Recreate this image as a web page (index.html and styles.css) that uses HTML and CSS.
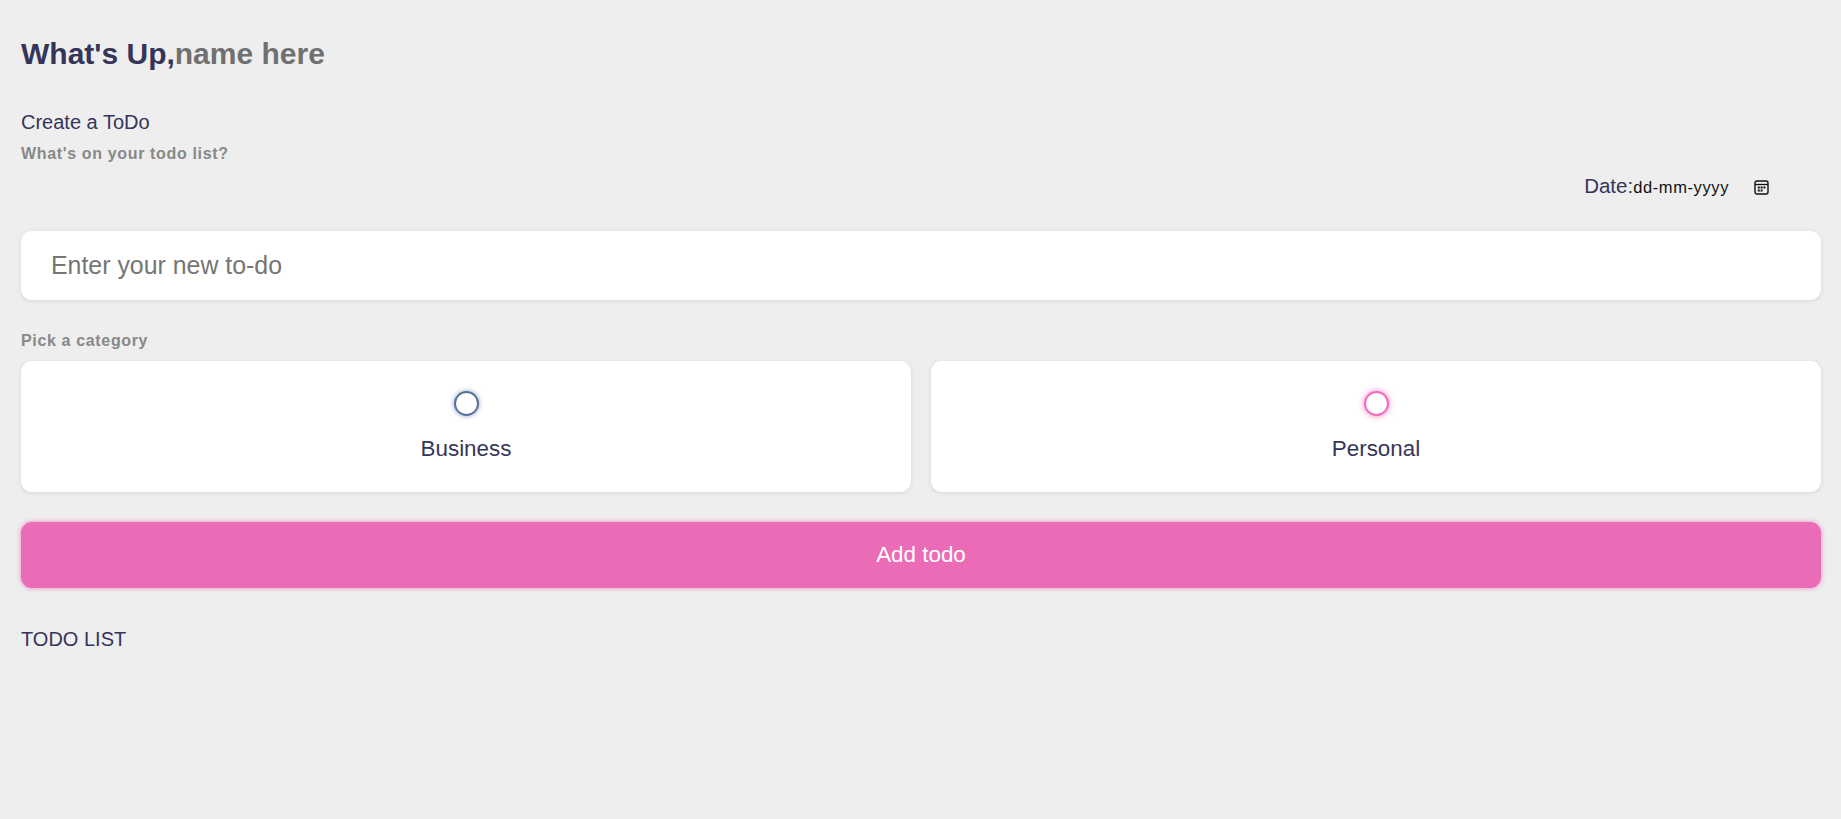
FILE: index.html
```html
<!DOCTYPE html>
<html lang="en">
<head>
<meta charset="utf-8">
<title>ToDo</title>
<link rel="stylesheet" href="styles.css">
</head>
<body>
<main class="app">
  <h2 class="greeting">What's Up,<span class="name">name here</span></h2>
  <section class="create">
    <h3 class="create-title">Create a ToDo</h3>
    <h4 class="label">What's on your todo list?</h4>
    <div class="date-row">
      <span class="date-label">Date:</span>
      <span class="date-value">dd-mm-yyyy</span>
      <svg class="date-icon" width="15" height="15" viewBox="0 0 15 15" aria-hidden="true">
        <rect x="1" y="1" width="13" height="13" rx="2" fill="none" stroke="#111" stroke-width="1.4"/>
        <path d="M1 4.5h13" stroke="#111" stroke-width="1.3"/>
        <path d="M3.8 6.6h2v2h-2zM6.6 6.6h2v2h-2zM9.4 6.6h2v2h-2zM3.8 9.6h2v2h-2zM6.6 9.6h2v2h-2z" fill="#111"/>
      </svg>
    </div>
    <div class="todo-input">Enter your new to-do</div>
    <h4 class="label label-category">Pick a category</h4>
    <div class="options">
      <div class="option">
        <span class="bubble bubble-business"></span>
        <span class="option-text">Business</span>
      </div>
      <div class="option">
        <span class="bubble bubble-personal"></span>
        <span class="option-text">Personal</span>
      </div>
    </div>
    <div class="add-btn">Add todo</div>
  </section>
  <section class="list">
    <h3 class="list-title">TODO LIST</h3>
  </section>
</main>
</body>
</html>
```
FILE: styles.css
```css
* { box-sizing: border-box; margin: 0; padding: 0; }
html, body { height: 100%; }
body {
  background: #eeeeee;
  color: #35355a;
  font-family: "Liberation Sans", Arial, sans-serif;
  overflow: hidden;
}
.app { padding: 37px 20px 0 21px; }
.greeting { font-size: 30px; line-height: 34px; font-weight: 700; }
.name { color: #707070; }
.create { margin-top: 40px; }
.create-title { font-size: 20px; line-height: 23px; font-weight: 400; }
.label { font-size: 16px; line-height: 18px; font-weight: 700; color: #888888; letter-spacing: 0.65px; }
.create-title + .label { margin-top: 11px; }
.date-row {
  display: flex;
  align-items: center;
  justify-content: flex-end;
  height: 24px;
  margin-top: 11px;
  padding-right: 52px;
}
.date-label { font-size: 20.5px; }
.date-value { font-size: 16.5px; letter-spacing: 0.6px; color: #111111; margin-top: 2px; margin-right: 1px; }
.date-icon { margin-left: 24px; margin-top: 2px; }
.todo-input {
  margin-top: 33px;
  height: 69px;
  display: flex;
  align-items: center;
  padding-left: 30px;
  background: #fff;
  border-radius: 11px;
  box-shadow: 0 1px 4px rgba(0, 0, 0, 0.1);
  color: #757575;
  font-size: 24.9px;
}
.label-category { margin-top: 32px; }
.options { display: grid; grid-template-columns: 1fr 1fr; gap: 20px; margin-top: 11px; }
.option {
  height: 131px;
  display: flex;
  flex-direction: column;
  align-items: center;
  padding-top: 30px;
  background: #fff;
  border-radius: 11px;
  box-shadow: 0 1px 4px rgba(0, 0, 0, 0.1);
}
.bubble { width: 25px; height: 25px; border-radius: 50%; border: 2.5px solid; background: #fff; }
.bubble-business { border-color: #5a7299; box-shadow: 0 0 5px rgba(58, 100, 168, 0.6); }
.bubble-personal { border-color: #ef6cbc; box-shadow: 0 0 6px rgba(234, 64, 164, 0.65); }
.option-text { margin-top: 19.5px; font-size: 22.4px; line-height: 25px; }
.add-btn {
  margin-top: 30px;
  height: 66px;
  display: flex;
  align-items: center;
  justify-content: center;
  background: #ea6cb7;
  border-radius: 11px;
  box-shadow: 0 0 5px rgba(234, 64, 164, 0.6);
  color: #fff;
  font-size: 22.4px;
}
.list { margin-top: 40px; }
.list-title { font-size: 20px; line-height: 23px; font-weight: 400; }
```
